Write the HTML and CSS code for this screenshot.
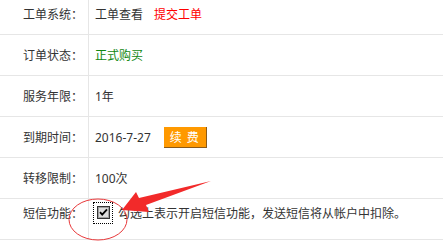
FILE: index.html
```html
<!DOCTYPE html>
<html lang="zh">
<head>
<meta charset="utf-8">
<link rel="stylesheet" href="styles.css">
</head>
<body>
<div class="page">
  <div class="panel">
    <div class="row">
      <div class="label">工单系统：</div>
      <div class="value"><span>工单查看</span><span class="red">提交工单</span></div>
    </div>
    <div class="row">
      <div class="label">订单状态：</div>
      <div class="value"><span class="green">正式购买</span></div>
    </div>
    <div class="row">
      <div class="label">服务年限：</div>
      <div class="value"><span>1年</span></div>
    </div>
    <div class="row">
      <div class="label">到期时间：</div>
      <div class="value"><span>2016-7-27</span><span class="btn">续&nbsp;费</span></div>
    </div>
    <div class="row">
      <div class="label">转移限制：</div>
      <div class="value"><span>100次</span></div>
    </div>
    <div class="row last">
      <div class="label">短信功能：</div>
      <div class="value">
        <span class="focus"><svg class="cb" width="13" height="13" viewBox="0 0 13 13"><rect x="0.5" y="0.5" width="12" height="12" fill="#dcdcdc" stroke="#333"/><rect x="1.5" y="1.5" width="10" height="10" fill="none" stroke="#a0a0a0"/><path d="M3 6.2 L5.2 8.6 L10 3.4" fill="none" stroke="#000" stroke-width="1.8"/></svg></span>
        <span class="hint">勾选上表示开启短信功能，发送短信将从帐户中扣除。</span>
      </div>
    </div>
  </div>
  <svg class="annot" width="443" height="243" viewBox="0 0 443 243">
    <ellipse cx="98" cy="219.5" rx="29" ry="20.5" fill="none" stroke="#e8383a" stroke-width="1"/>
    <polygon points="122,210 136,192 139,198 211,181 146,205 149,212" fill="#f22a2a"/>
  </svg>
</div>
</body>
</html>
```
FILE: styles.css
```css
html, body {
  margin: 0;
  padding: 0;
  background: #fff;
}
.page {
  position: relative;
  width: 443px;
  height: 243px;
  overflow: hidden;
  font-family: "Noto Sans", "Noto Sans CJK SC", sans-serif;
  font-size: 12px;
  color: #333;
}
.panel {
  margin-top: -6px;
}
.row {
  display: flex;
  height: 40px;
  border-bottom: 1px solid #e6e6e6;
}
.label {
  width: 83px;
  padding-right: 5px;
  border-right: 1px solid #e6e6e6;
  text-align: right;
  display: flex;
  align-items: center;
  justify-content: flex-end;
  white-space: nowrap;
}
.value {
  flex: 1;
  display: flex;
  align-items: center;
  padding-left: 6px;
  white-space: nowrap;
}
.red {
  color: #f00;
  margin-left: 11px;
}
.green {
  color: #118811;
}
.btn {
  display: inline-flex;
  align-items: center;
  justify-content: center;
  margin-left: 13px;
  width: 42px;
  height: 20px;
  background: #ff9900;
  color: #fff;
  border-right: 1px solid #8a5a1a;
  border-bottom: 1px solid #8a5a1a;
  letter-spacing: 1px;
}
.last .label,
.last .value {
  padding-bottom: 13px;
  height: 27px;
}
.focus {
  display: inline-flex;
  align-items: center;
  justify-content: center;
  width: 18px;
  height: 20px;
  margin-left: -2px;
  border: 1px dotted #000;
}
.cb {
  display: block;
}
.hint {
  margin-left: 5px;
}
.annot {
  position: absolute;
  left: 0;
  top: 0;
  pointer-events: none;
}
```
